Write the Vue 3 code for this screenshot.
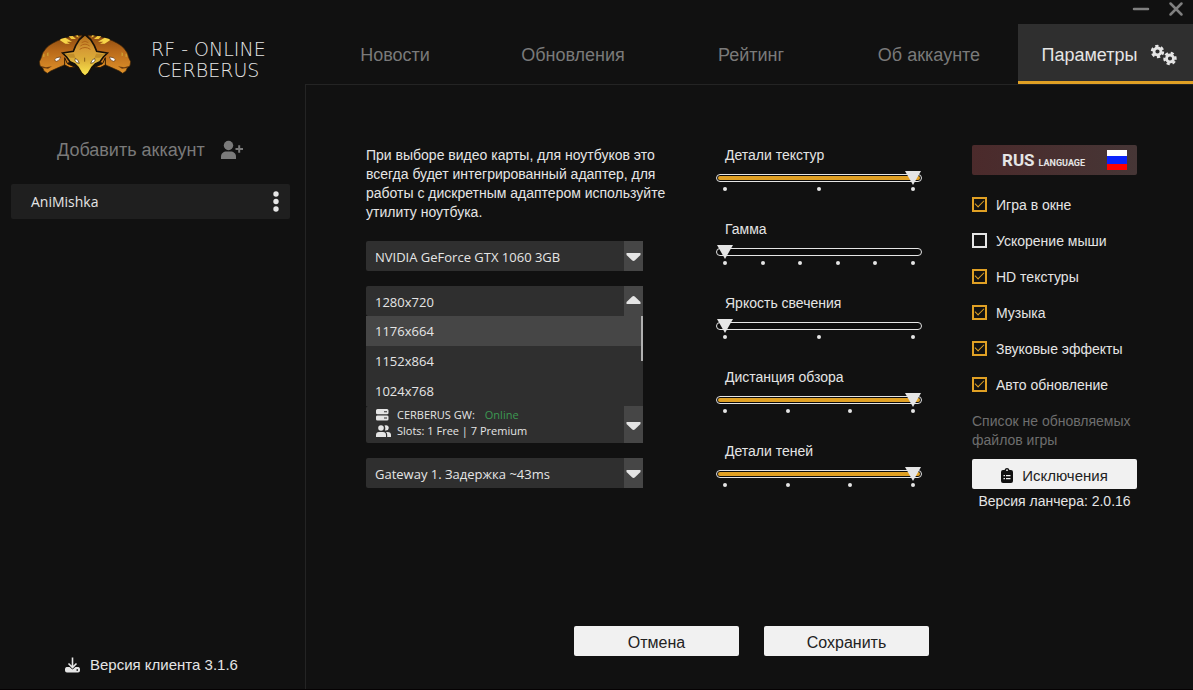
<script setup>
import { reactive, computed } from 'vue';

const state = reactive({
  tab: 'Параметры',
  videoCard: 'NVIDIA GeForce GTX 1060 3GB',
  resolution: '1280x720',
  hovered: '1176x664',
  menuOpen: true,
  firstRow: 0,
  gateway: 'Gateway 1. Задержка ~43ms',
});

const tabs = ['Новости', 'Обновления', 'Рейтинг', 'Об аккаунте', 'Параметры'];

const resolutions = ['1176x664', '1152x864', '1024x768', '800x600', '720x576', '720x480'];
const visibleRows = 3;

const sliders = reactive([
  { id: 'textures', title: 'Детали текстур', value: 2, steps: 3 },
  { id: 'gamma', title: 'Гамма', value: 0, steps: 6 },
  { id: 'glow', title: 'Яркость свечения', value: 0, steps: 3 },
  { id: 'distance', title: 'Дистанция обзора', value: 3, steps: 4 },
  { id: 'shadows', title: 'Детали теней', value: 3, steps: 4 },
]);

const options = reactive([
  { id: 'windowed', title: 'Игра в окне', checked: true },
  { id: 'mouse', title: 'Ускорение мыши', checked: false },
  { id: 'hd', title: 'HD текстуры', checked: true },
  { id: 'music', title: 'Музыка', checked: true },
  { id: 'sound', title: 'Звуковые эффекты', checked: true },
  { id: 'update', title: 'Авто обновление', checked: true },
]);

const visibleResolutions = computed(() => {
  return resolutions.slice(state.firstRow, state.firstRow + visibleRows);
});

const thumbStyle = computed(() => {
  return {
    height: (visibleRows / resolutions.length) * 100 + '%',
    top: (state.firstRow / resolutions.length) * 100 + '%',
  };
});

const scrollMenu = (event) => {
  const next = state.firstRow + Math.sign(event.deltaY);
  state.firstRow = Math.min(Math.max(next, 0), resolutions.length - visibleRows);
};

const fillStyle = (slider) => {
  return { width: (slider.value / (slider.steps - 1)) * 100 + '%' };
};

const chooseResolution = (item) => {
  state.resolution = item;
  state.menuOpen = false;
};
</script>

<template>
  <div class="launcher">
    <aside class="sidebar">
      <div class="brand">
        <svg class="brand-logo" viewBox="27 27 276 129" aria-hidden="true">
          <defs>
            <linearGradient id="side" x1="0" y1="0" x2="0" y2="1">
              <stop offset="0" stop-color="#8a4a10" />
              <stop offset="0.4" stop-color="#b8691a" />
              <stop offset="1" stop-color="#e0922a" />
            </linearGradient>
            <linearGradient id="front" x1="0" y1="0" x2="0" y2="1">
              <stop offset="0" stop-color="#b06c1a" />
              <stop offset="0.35" stop-color="#d69a34" />
              <stop offset="0.6" stop-color="#dcae38" />
              <stop offset="1" stop-color="#ffec50" />
            </linearGradient>
            <g id="half">
              <path d="M156 31C118 31 68 48 48 70L38 84L33 100L28 110L30 122L38 128L42 138L52 145L62 138L80 130L98 122L118 112L150 70Z" fill="url(#side)" stroke="#3a2208" stroke-width="2" />
              <path d="M30 122L48 127L66 124L54 131L40 129Z" fill="#6a3a0e" />
              <path d="M92 42L106 38L126 50L110 50L120 56L106 56L90 46Z" fill="#f7d548" />
              <path d="M116 34L128 33L138 42L124 42Z M136 32L144 31L146 38Z" fill="#f2c83c" />
              <path d="M74 104Q78 96 92 96Q90 106 80 109Q74 108 74 104Z" fill="#fff" stroke="#5a300a" stroke-width="2" />
              <path d="M52 84L55 82V94L52 92Z M40 88L43 86V96L40 95Z" fill="#d2b13a" />
              <path d="M104 98L112 116L134 126L120 128L104 120Z" fill="#e08c22" stroke="#2a1806" stroke-width="3" />
            </g>
          </defs>
          <use href="#half" />
          <use href="#half" transform="translate(330 0) scale(-1 1)" />
          <path d="M165 29L148 44L137 62L130 79L98 84L110 96L120 110L134 117L144 127L154 144L165 154L176 144L186 127L196 117L210 110L220 96L232 84L200 79L193 62L182 44Z" fill="url(#front)" stroke="#171008" stroke-width="5" />
          <path d="M106 87L132 86L136 98L120 98Z M224 87L198 86L194 98L210 98Z" fill="#c08e2a" />
          <path d="M155 53Q165 44 175 53M151 63Q165 52 179 63M149 73Q165 62 181 73" fill="none" stroke="#b06418" stroke-width="3" />
          <path d="M164 98V110" stroke="#8a6018" stroke-width="3" />
          <path d="M136 100L144 106L148 115L140 113L135 107Z M194 100L186 106L182 115L190 113L195 107Z" fill="#fff" stroke="#4d3108" stroke-width="2" />
        </svg>
        <h1 class="brand-name">RF - ONLINE<br />CERBERUS</h1>
      </div>

      <button class="add-account" type="button">
        <span>Добавить аккаунт</span>
        <svg width="24" height="20" viewBox="0 0 24 20" aria-hidden="true">
          <circle cx="8.500" cy="5.500" r="4.700" fill="currentColor" />
          <path d="M1 19V16.500C1 13.500 3.500 11.500 6.500 11.500H10.500C13.500 11.500 16 13.500 16 16.500V19Z" fill="currentColor" />
          <path d="M15.500 9H23M19.200 5.200V12.800" stroke="currentColor" stroke-width="2" />
        </svg>
      </button>

      <div class="account">
        <span>AniMishka</span>
        <button class="account-menu" type="button" aria-label="Меню аккаунта">
          <svg width="8" height="22" viewBox="0 0 8 22" aria-hidden="true">
            <circle cx="4" cy="3" r="2.700" />
            <circle cx="4" cy="10.500" r="2.700" />
            <circle cx="4" cy="18" r="2.700" />
          </svg>
        </button>
      </div>

      <div class="client-version">
        <svg width="15" height="16" viewBox="0 0 15 16" aria-hidden="true">
          <path d="M7.500 0.500V10M3.500 6.500L7.500 10.500L11.500 6.500" fill="none" stroke="#e5e5e5" stroke-width="1.600" />
          <path fill-rule="evenodd" d="M1.500 10H4.500L7.500 12.500L10.500 10H13.500Q15 10.500 15 12V13.500Q15 15.500 13 15.500H2Q0 15.500 0 13.500V12Q0 10.500 1.500 10ZM11.500 12.300V13.700H13V12.300Z" fill="#e5e5e5" />
        </svg>
        <span>Версия клиента 3.1.6</span>
      </div>
    </aside>

    <div class="content">
      <div class="window-bar">
        <button type="button" aria-label="Свернуть">
          <svg width="18" height="16" viewBox="0 0 18 16"><path d="M2 8H16" /></svg>
        </button>
        <button type="button" aria-label="Закрыть">
          <svg width="16" height="16" viewBox="0 0 16 16"><path d="M2.500 2.500L13.500 13.500M13.500 2.500L2.500 13.500" /></svg>
        </button>
      </div>

      <nav class="tabs">
        <button
          v-for="tab in tabs"
          :key="tab"
          type="button"
          class="tab"
          :class="{ active: tab === state.tab }"
          @click="state.tab = tab"
        >
          <span>{{ tab }}</span>
          <svg v-if="tab === 'Параметры'" width="28" height="22" viewBox="0 0 28 22" aria-hidden="true">
            <g fill="none" stroke="currentColor">
              <circle cx="7.500" cy="7.500" r="3.500" stroke-width="2.800" />
              <circle cx="7.500" cy="7.500" r="5.500" stroke-width="2.400" stroke-dasharray="3.200 2.560" />
              <circle cx="20" cy="14.500" r="3.500" stroke-width="2.800" />
              <circle cx="20" cy="14.500" r="5.500" stroke-width="2.400" stroke-dasharray="3.200 2.560" transform="rotate(30 20 14.500)" />
            </g>
          </svg>
        </button>
      </nav>

      <main class="settings">
        <div class="columns">
          <section class="video">
            <p class="hint">
              При выборе видео карты, для ноутбуков это всегда будет интегрированный адаптер, для работы с дискретным адаптером используйте утилиту ноутбука.
            </p>

            <div class="dropdown">
              <select v-model="state.videoCard" aria-label="Видео карта">
                <option>NVIDIA GeForce GTX 1060 3GB</option>
              </select>
              <span class="arrow"><svg width="15" height="10" viewBox="0 0 15 10"><path d="M0.500 1H14.500V3L9 8.300Q7.500 9.500 6 8.300L0.500 3Z" /></svg></span>
            </div>

            <div class="dropdown">
              <select v-model="state.resolution" aria-label="Разрешение">
                <option>1280x720</option>
                <option v-for="item in resolutions" :key="item">{{ item }}</option>
              </select>
              <span class="arrow up"><svg width="15" height="10" viewBox="0 0 15 10"><path d="M0.500 1H14.500V3L9 8.300Q7.500 9.500 6 8.300L0.500 3Z" /></svg></span>
              <div v-if="state.menuOpen" class="menu" @wheel.prevent="scrollMenu">
                <ul role="listbox" aria-label="Список разрешений">
                  <li
                    v-for="item in visibleResolutions"
                    :key="item"
                    role="option"
                    :class="{ hovered: item === state.hovered }"
                    @mouseenter="state.hovered = item"
                    @click="chooseResolution(item)"
                  >{{ item }}</li>
                </ul>
                <span class="menu-thumb" :style="thumbStyle"></span>
              </div>
            </div>

            <button class="server" type="button">
              <span class="server-line">
                <svg width="16" height="12" viewBox="0 0 16 12" aria-hidden="true">
                  <path fill-rule="evenodd" d="M1.500 0H11Q12.500 0 12.500 1.500V4Q12.500 5.200 11 5.200H1.500Q0 5.200 0 4V1.500Q0 0 1.500 0ZM8 2.200V3.200H11V2.200ZM1.500 6.400H11Q12.500 6.400 12.500 7.800V10.200Q12.500 11.600 11 11.600H1.500Q0 11.600 0 10.200V7.800Q0 6.400 1.500 6.400ZM8 8.500V9.500H11V8.500Z" />
                </svg>
                <span>CERBERUS GW:</span>
                <span class="online">Online</span>
              </span>
              <span class="server-line">
                <svg width="16" height="12" viewBox="0 0 16 12" aria-hidden="true">
                  <circle cx="5" cy="3" r="2.800" />
                  <path d="M0 12V10Q0 7 3 7H7Q10 7 10 10V12ZM8.500 0.500Q12.500 -0.500 12.800 3Q12.500 6 9 5.500Q9.800 2.500 8.500 0.500ZM10 7H11.500Q15 7 15 10V12H11.200V10Q11.200 8 10 7Z" />
                </svg>
                <span>Slots: 1 Free | 7 Premium</span>
              </span>
              <span class="arrow"><svg width="15" height="10" viewBox="0 0 15 10"><path d="M0.500 1H14.500V3L9 8.300Q7.500 9.500 6 8.300L0.500 3Z" /></svg></span>
            </button>

            <div class="dropdown">
              <select v-model="state.gateway" aria-label="Шлюз">
                <option>Gateway 1. Задержка ~43ms</option>
              </select>
              <span class="arrow"><svg width="15" height="10" viewBox="0 0 15 10"><path d="M0.500 1H14.500V3L9 8.300Q7.500 9.500 6 8.300L0.500 3Z" /></svg></span>
            </div>
          </section>

          <section class="sliders">
            <div v-for="slider in sliders" :key="slider.id" class="slider">
              <label :for="slider.id">{{ slider.title }}</label>
              <div class="track">
                <div class="track-line">
                  <div class="fill" :style="fillStyle(slider)"></div>
                </div>
                <input :id="slider.id" v-model.number="slider.value" type="range" min="0" :max="slider.steps - 1" />
              </div>
              <div class="dots">
                <i v-for="step in slider.steps" :key="step"></i>
              </div>
            </div>
          </section>

          <section class="options">
            <button class="language" type="button">
              <b>RUS</b>
              <small>LANGUAGE</small>
              <span class="flag"></span>
            </button>

            <div v-for="option in options" :key="option.id" class="option">
              <input :id="option.id" v-model="option.checked" type="checkbox" />
              <label :for="option.id">{{ option.title }}</label>
            </div>

            <p class="note">Список не обновляемых файлов игры</p>
            <button class="button exclusions" type="button">
              <svg width="12" height="15" viewBox="0 0 12 15" aria-hidden="true">
                <path fill-rule="evenodd" d="M2 2H3.500Q4 0 6 0Q8 0 8.500 2H10Q12 2 12 4V13Q12 15 10 15H2Q0 15 0 13V4Q0 2 2 2ZM5.200 1.500V3H6.800V1.500ZM2.500 7V8.200H4V7ZM5 7V8.200H9.500V7ZM2.500 10V11.200H4V10ZM5 10V11.200H9.500V10Z" fill="#111" />
              </svg>
              <span>Исключения</span>
            </button>
            <p class="launcher-version">Версия ланчера: 2.0.16</p>
          </section>
        </div>

        <div class="actions">
          <button class="button" type="button">Отмена</button>
          <button class="button" type="button">Сохранить</button>
        </div>
      </main>
    </div>
  </div>
</template>

<style>
body {
  margin: 0;
  background: #111;
}
</style>

<style scoped>
* {
  box-sizing: border-box;
}

.launcher {
  display: grid;
  grid-template-columns: 305px 1fr;
  min-height: 100vh;
  background: #111;
  color: #e5e5e5;
  font-family: "Liberation Sans", Arial, sans-serif;
  font-size: 14px;
  border-bottom: 1px solid #050203;
}

button {
  padding: 0;
  border: none;
  background: none;
  color: inherit;
  font: inherit;
  cursor: pointer;
}

p,
h1,
ul {
  margin: 0;
  padding: 0;
}

svg {
  display: block;
  flex: none;
}

.sidebar {
  display: flex;
  flex-direction: column;
  padding: 34px 15px 16px 11px;
}

.brand {
  display: flex;
  gap: 20px;
  padding-left: 28px;
}

.brand-logo {
  width: 92px;
  height: 43px;
}

.brand-name {
  padding-top: 5px;
  font-family: "DejaVu Sans", sans-serif;
  font-size: 19px;
  font-weight: 200;
  line-height: 21px;
  text-align: center;
  white-space: nowrap;
}

.add-account {
  display: flex;
  align-items: center;
  gap: 15px;
  margin-top: 57px;
  padding-left: 46px;
  height: 24px;
  color: #7a7a7a;
  font-size: 18px;
}

.account {
  display: flex;
  align-items: center;
  justify-content: space-between;
  height: 35px;
  margin-top: 22px;
  padding: 0 10px 0 20px;
  border-radius: 2px;
  background: #1f1f1f;
  font-family: "Open Sans", "Noto Sans", sans-serif;
}

.account-menu svg {
  fill: #e5e5e5;
}

.client-version {
  display: flex;
  align-items: center;
  gap: 10px;
  margin-top: auto;
  padding-left: 54px;
  font-size: 15px;
}

.content {
  display: flex;
  flex-direction: column;
}

.window-bar {
  display: flex;
  align-items: flex-start;
  justify-content: flex-end;
  gap: 18px;
  height: 24px;
  padding: 1px 9px 0 0;
}

.window-bar svg {
  fill: none;
  stroke: #808080;
  stroke-width: 2.5;
  stroke-linecap: round;
}

.tabs {
  display: grid;
  grid-template-columns: repeat(4, 1fr) 175px;
  height: 60px;
  margin-left: 1px;
}

.tab {
  display: flex;
  align-items: center;
  justify-content: center;
  gap: 13px;
  padding-top: 2px;
  color: #7a7a7a;
  font-size: 18px;
}

.tab.active {
  padding: 5px 0 0 9px;
  border-bottom: 3px solid #e0a024;
  background: #2f2f2f;
  color: #e5e5e5;
}

.settings {
  display: flex;
  flex: 1;
  flex-direction: column;
  padding: 60px 56px 33px 60px;
  border-top: 1px solid #242424;
  border-left: 1px solid #242424;
}

.columns {
  display: grid;
  grid-template-columns: 300fr 206fr 165fr;
  gap: 50px;
}

.hint {
  padding-top: 1px;
  margin-bottom: 19px;
  line-height: 19px;
}

.dropdown {
  position: relative;
  margin: 0 23px 15px 0;
}

.dropdown select {
  display: block;
  width: 100%;
  height: 30px;
  padding: 2px 28px 0 9px;
  border: none;
  border-radius: 2px;
  outline: none;
  appearance: none;
  background: #2f2f2f;
  color: #e5e5e5;
  font-family: "Open Sans", "Noto Sans", sans-serif;
  font-size: 13px;
}

.arrow {
  position: absolute;
  top: 0;
  right: 0;
  bottom: 0;
  display: flex;
  align-items: center;
  justify-content: center;
  width: 19px;
  padding: 2px 1px 0 0;
  background: #464646;
  pointer-events: none;
}

.arrow svg {
  fill: #e5e5e5;
}

.arrow.up {
  padding: 0 1px 2px 0;
}

.arrow.up svg {
  transform: rotate(180deg);
}

.menu {
  position: absolute;
  z-index: 1;
  top: 30px;
  left: 0;
  right: 0;
  background: #2f2f2f;
}

.menu ul {
  list-style: none;
}

.menu li {
  height: 30px;
  padding-left: 9px;
  font-family: "Open Sans", "Noto Sans", sans-serif;
  font-size: 13px;
  line-height: 30px;
  cursor: pointer;
}

.menu li.hovered {
  background: #464646;
}

.menu-thumb {
  position: absolute;
  right: 0;
  width: 2px;
  background: #b0b0b0;
}

.server {
  position: relative;
  display: block;
  width: calc(100% - 23px);
  margin: 90px 0 15px;
  padding: 1px 28px 4px 10px;
  border-radius: 2px;
  background: #2f2f2f;
  font-family: "Open Sans", "Noto Sans", sans-serif;
  font-size: 11px;
  line-height: 16px;
}

.server-line {
  display: flex;
  align-items: center;
  gap: 5px;
}

.server-line svg {
  fill: #e5e5e5;
}

.online {
  padding-left: 5px;
  color: #3c9a52;
}

.slider {
  height: 74px;
}

.slider label {
  display: block;
  padding-left: 9px;
  line-height: 20px;
}

.track {
  position: relative;
  margin-top: 9px;
}

.track-line {
  height: 8px;
  padding: 1px;
  border: 1px solid #e5e5e5;
  border-radius: 4px;
  background: #0b0b0b;
}

.fill {
  height: 4px;
  border-radius: 2px;
  background: #e0a024;
}

.track input {
  position: absolute;
  top: -3px;
  left: 0;
  width: 100%;
  height: 14px;
  margin: 0;
  appearance: none;
  background: none;
  cursor: pointer;
}

.track input::-webkit-slider-thumb {
  width: 18px;
  height: 14px;
  appearance: none;
  background: #e5e5e5;
  clip-path: polygon(1px 0, 17px 0, 9px 14px);
}

.dots {
  display: flex;
  justify-content: space-between;
  padding: 5px 7px 0;
}

.dots i {
  width: 4px;
  height: 4px;
  border-radius: 50%;
  background: #e5e5e5;
}

.language {
  display: flex;
  align-items: baseline;
  width: 100%;
  height: 30px;
  margin-bottom: 12px;
  padding: 0 10px 0 30px;
  border-radius: 2px;
  background: linear-gradient(90deg, #4b2a2b, #463636);
  font-family: Roboto, sans-serif;
  font-size: 17px;
  line-height: 30px;
}

.language small {
  margin-left: 4px;
  font-size: 9px;
  font-weight: 700;
}

.flag {
  align-self: center;
  width: 20px;
  height: 20px;
  margin-left: auto;
  background: linear-gradient(#fff 6px, #0b24fb 6px, #0b24fb 14px, #f00 14px);
}

.option {
  display: flex;
  align-items: center;
  gap: 9px;
  height: 36px;
}

.option input {
  display: grid;
  place-content: center;
  width: 15px;
  height: 15px;
  margin: 0 0 2px;
  border: 2px solid #e5e5e5;
  appearance: none;
}

.option input:checked {
  border-color: #e0a024;
}

.option input:checked::before {
  content: "";
  width: 8px;
  height: 4px;
  margin-bottom: 3px;
  border-bottom: 1px solid #e0a024;
  border-left: 1px solid #e0a024;
  transform: rotate(-45deg);
}

.note {
  margin: 9px 0;
  color: #6e6e6e;
  line-height: 19px;
}

.button {
  display: flex;
  align-items: center;
  justify-content: center;
  gap: 9px;
  width: 165px;
  height: 30px;
  padding-top: 3px;
  border-radius: 2px;
  background: #f1f1f1;
  color: #222;
  font-size: 16px;
}

.exclusions {
  width: 100%;
  padding-top: 2px;
  font-size: 15px;
}

.launcher-version {
  margin-top: 3px;
  line-height: 19px;
  text-align: center;
}

.actions {
  display: flex;
  justify-content: center;
  gap: 25px;
  margin-top: auto;
}
</style>
